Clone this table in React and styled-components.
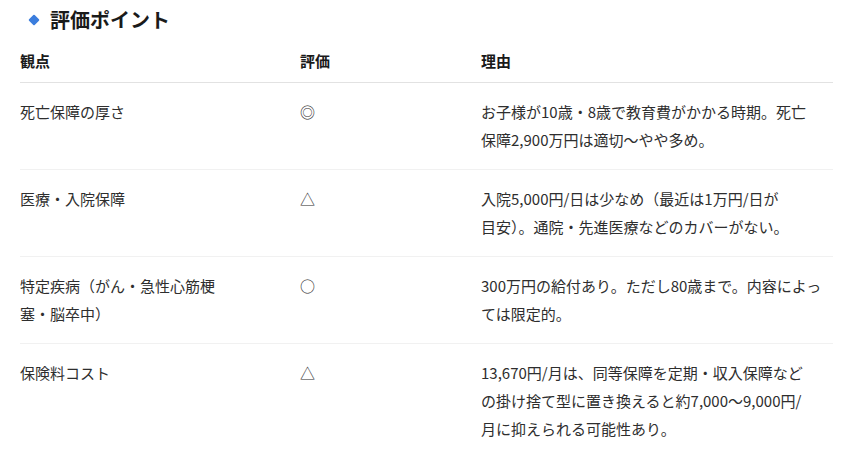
import React from 'react';
import styled, { createGlobalStyle } from 'styled-components';

const GlobalStyle = createGlobalStyle`
  body {
    margin: 0;
    background: #ffffff;
    font-family: 'Noto Sans CJK JP', 'Noto Sans', sans-serif;
    color: #333333;
  }
`;

const Page = styled.div`
  padding: 6px 17px 0 20px;
  width: 813px;
`;

const Title = styled.h3`
  display: flex;
  align-items: center;
  gap: 12px;
  margin: 0;
  padding-left: 10px;
  font-size: 20px;
  line-height: 28px;
  font-weight: 700;
  color: #1a1a1a;
`;

const Diamond = styled.span`
  width: 8px;
  height: 8px;
  background: #3b7ddd;
  transform: rotate(45deg);
  border-radius: 1px;
`;

const Table = styled.div`
  margin-top: 6px;
  display: grid;
  grid-template-columns: 280px 181px minmax(0, 1fr);
`;

const Row = styled.div`
  display: contents;

  & > div {
    border-bottom: 1px solid ${(p) => (p.$head ? '#e2e2e2' : p.$last ? 'transparent' : '#f1f1f1')};
  }
`;

const Cell = styled.div`
  padding: ${(p) => (p.$head ? '7px 16px 7px 0' : '15px 16px 15px 0')};
  font-size: 15px;
  line-height: 28px;
  font-weight: ${(p) => (p.$head ? 700 : 400)};
  color: ${(p) => (p.$head ? '#1a1a1a' : '#2e2e2e')};
`;

const Line = styled.span`
  display: block;
  white-space: nowrap;
`;

const rows = [
  [['死亡保障の厚さ'], '◎', ['お子様が10歳・8歳で教育費がかかる時期。死亡', '保障2,900万円は適切〜やや多め。']],
  [['医療・入院保障'], '△', ['入院5,000円/日は少なめ（最近は1万円/日が', '目安）。通院・先進医療などのカバーがない。']],
  [['特定疾病（がん・急性心筋梗', '塞・脳卒中）'], '○', ['300万円の給付あり。ただし80歳まで。内容によっ', 'ては限定的。']],
  [['保険料コスト'], '△', ['13,670円/月は、同等保障を定期・収入保障など', 'の掛け捨て型に置き換えると約7,000〜9,000円/', '月に抑えられる可能性あり。']],
];

export default function App() {
  return (
    <Page>
      <GlobalStyle />
      <Title>
        <Diamond />
        評価ポイント
      </Title>
      <Table>
        <Row $head>
          <Cell $head>観点</Cell>
          <Cell $head>評価</Cell>
          <Cell $head>理由</Cell>
        </Row>
        {rows.map(([point, mark, reason], i) => (
          <Row key={point[0]} $last={i === rows.length - 1}>
            <Cell>
              {point.map((l) => <Line key={l}>{l}</Line>)}
            </Cell>
            <Cell>{mark}</Cell>
            <Cell>
              {reason.map((l) => <Line key={l}>{l}</Line>)}
            </Cell>
          </Row>
        ))}
      </Table>
    </Page>
  );
}
